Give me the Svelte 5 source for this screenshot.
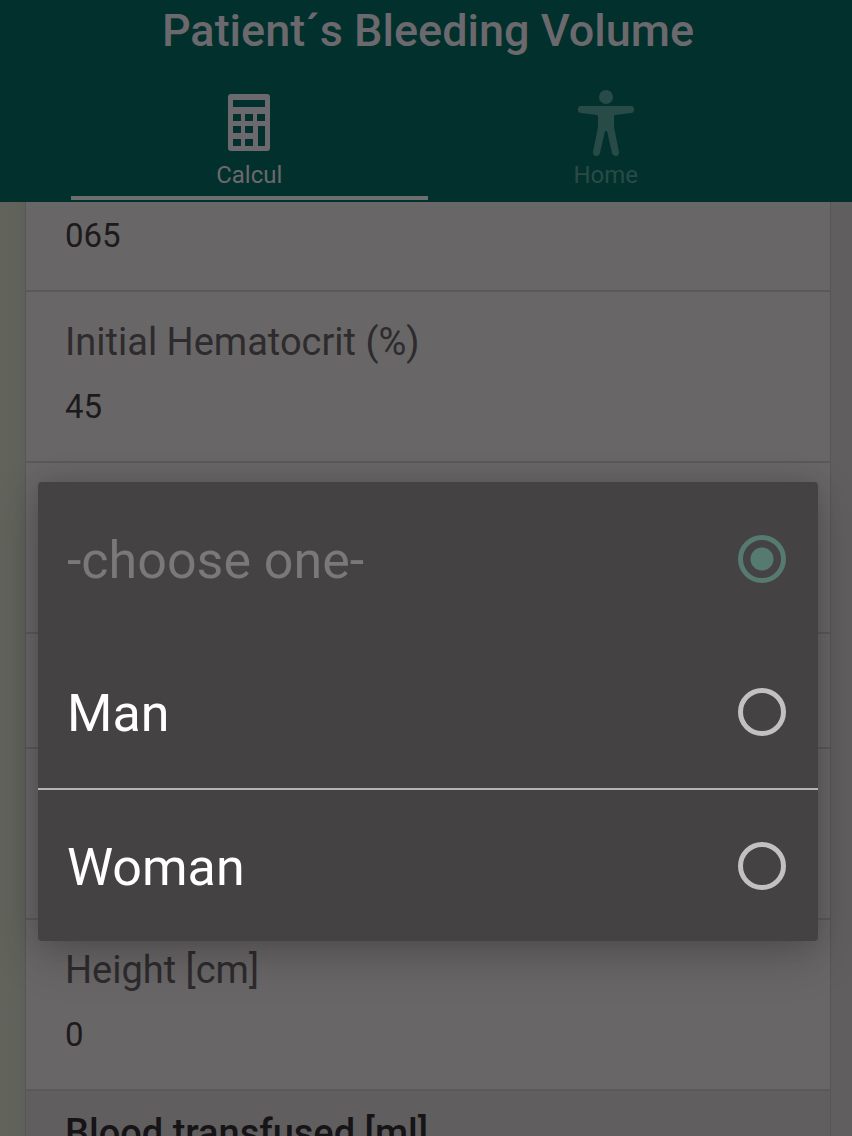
<script>
  let tab = "calcul";
  let sex = "";
  let hematocrit = "45";
  let weight = "065";
  let height = "0";

  const options = [
    { value: "", text: "-choose one-", disabled: true },
    { value: "man", text: "Man" },
    { value: "woman", text: "Woman" },
  ];
</script>

<div class="page">
  <header>
    <h1>Patient´s Bleeding Volume</h1>
    <nav>
      <button class="tab" class:active={tab === "calcul"} on:click={() => (tab = "calcul")}>
        <svg width="58" height="68" viewBox="0 0 58 68" aria-hidden="true">
          <path
            fill="currentColor"
            fill-rule="evenodd"
            d="M11 5h36a3 3 0 0 1 3 3v51a3 3 0 0 1-3 3H11a3 3 0 0 1-3-3V8a3 3 0 0 1 3-3z
              M13 11v7h32v-7z
              M13 25v7h8v-7z M25 25v7h8v-7z M37 25v7h8v-7z
              M13 37v7h8v-7z M25 37v7h8v-7z M38 37v20h7v-20z
              M13 50v7h8v-7z M25 50v7h8v-7z"
          />
        </svg>
        <span>Calcul</span>
      </button>
      <button class="tab" class:active={tab === "home"} on:click={() => (tab = "home")}>
        <svg width="58" height="68" viewBox="0 0 58 68" aria-hidden="true">
          <g fill="currentColor">
            <circle cx="29" cy="8" r="7" />
            <path
              d="M4 17h50a3 3 0 0 1 3 4q0 3-3 3L38 26q-1 0-1 2v10l5 25q0 4-3 4t-4-3L30 42h-2l-5 22q-1 3-4 3t-3-4l5-25V28q0-2-1-2L4 24q-3 0-3-3a3 3 0 0 1 3-4z"
            />
          </g>
        </svg>
        <span>Home</span>
      </button>
    </nav>
  </header>

  <main>
    <form on:submit|preventDefault>
      <div class="item first">
        <input type="text" aria-label="Weight" bind:value={weight} />
      </div>

      <div class="item">
        <label for="hematocrit">Initial Hematocrit (%)</label>
        <input type="text" id="hematocrit" bind:value={hematocrit} />
      </div>

      <!-- Sex, with its open list of options -->
      <div class="item tall anchor">
        <div class="popup" role="radiogroup" aria-label="Sex">
          {#each options as o}
            <label class="option" class:disabled={o.disabled}>
              <span>{o.text}</span>
              <input type="radio" name="sex" value={o.value} disabled={o.disabled} bind:group={sex} />
            </label>
          {/each}
        </div>
      </div>
      <div class="item short"></div>
      <div class="item tall"></div>

      <div class="item">
        <label for="height">Height [cm]</label>
        <input type="text" id="height" bind:value={height} />
      </div>

      <h2>Blood transfused [ml]</h2>
    </form>
  </main>
</div>

<style>
  :global(body) {
    margin: 0;
    background: #605e5f;
  }

  .page {
    display: flex;
    flex-direction: column;
    height: 100vh;
    overflow: hidden;
    font-family: Roboto, sans-serif;
  }

  header {
    flex: none;
    background: #02302c;
    color: #6b696d;
  }

  h1 {
    margin: 0;
    padding: 3px 0 30px 4px;
    font-size: 45px;
    line-height: 56px;
    font-weight: 500;
    text-align: center;
  }

  nav {
    display: flex;
    padding: 0 68px 0 71px;
  }

  .tab {
    flex: 1;
    display: flex;
    flex-direction: column;
    align-items: center;
    gap: 2px;
    padding: 0 0 5px;
    border: 0;
    border-bottom: 4px solid transparent;
    margin-bottom: 2px;
    background: none;
    color: #284b47;
    font-family: inherit;
    font-size: 24px;
    line-height: 32px;
    cursor: pointer;
  }

  .tab.active {
    color: #6b696d;
    border-bottom-color: #6b6f6e;
  }

  main {
    flex: 1;
    padding: 0 21px 0 25px;
    background: linear-gradient(to right, #62645c, #5e605a 25px, #605e5f 26px);
  }

  form {
    border: 0 solid #575556;
    border-width: 0 1px;
    background: #696667;
  }

  .item {
    display: flex;
    flex-direction: column;
    gap: 23px;
    box-sizing: border-box;
    padding: 28px 39px 34px;
    border-bottom: 2px solid #5b5959;
  }

  .first {
    padding-top: 14px;
  }

  .tall {
    min-height: 171px;
  }

  .short {
    min-height: 115px;
  }

  .item > label {
    color: #2d2b2d;
    font-size: 38px;
    line-height: 44px;
  }

  .item > input {
    width: 100%;
    height: 40px;
    padding: 0;
    border: 0;
    outline: none;
    background: none;
    color: #1c1a1c;
    font-family: inherit;
    font-size: 33px;
    line-height: 40px;
  }

  .anchor {
    position: relative;
  }

  .popup {
    position: absolute;
    z-index: 1;
    top: 19px;
    left: 12px;
    right: 12px;
    border-radius: 4px;
    background: #444243;
    box-shadow: 0 16px 48px rgba(0, 0, 0, 0.2), 0 0 24px rgba(0, 0, 0, 0.12);
  }

  .option {
    display: flex;
    align-items: center;
    justify-content: space-between;
    box-sizing: border-box;
    height: 153px;
    padding: 0 32px 0 29px;
    color: #fff;
    font-size: 52px;
    line-height: 60px;
  }

  .option span {
    padding-top: 5px;
  }

  .option:last-child {
    border-top: 2px solid #b5b3b4;
  }

  .option.disabled {
    color: #7a7879;
  }

  .option input {
    appearance: none;
    flex: none;
    width: 48px;
    height: 48px;
    margin: 0;
    border: 5px solid #c2c0c1;
    border-radius: 50%;
  }

  .option input:checked {
    border-color: #567970;
    background: radial-gradient(circle, #567970 11px, transparent 12px);
  }

  h2 {
    margin: 0;
    padding: 20px 39px;
    background: #605e5f;
    color: #161416;
    font-size: 38px;
    line-height: 44px;
    font-weight: 500;
  }
</style>
